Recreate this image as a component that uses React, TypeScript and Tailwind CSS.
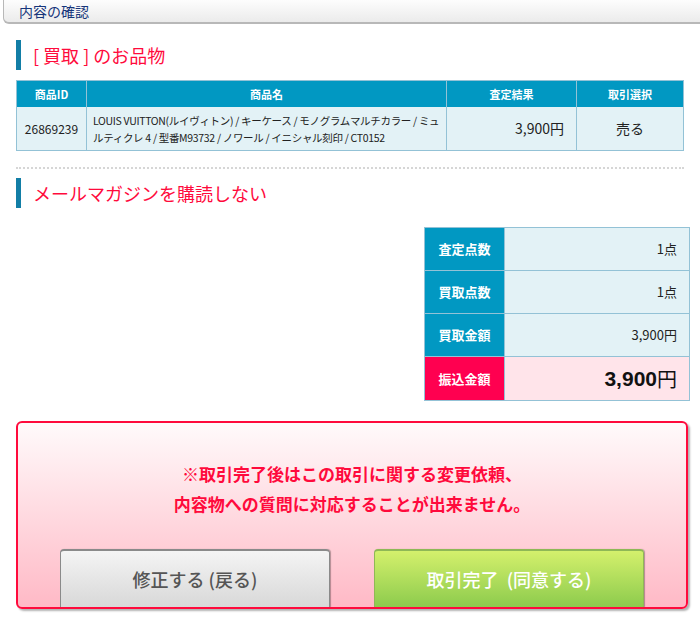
const font = "font-['Noto_Sans_CJK_JP','Noto_Sans',sans-serif]";

const SectionTitle = ({ children }: { children: React.ReactNode }) => (
  <div className="flex items-center h-[30px] border-l-[5px] border-[#127ea6] pl-[12px]">
    <h2 className="text-[18px] leading-none text-[#ff0a3c]">{children}</h2>
  </div>
);

const SummaryRow = ({ label, value }: { label: string; value: string }) => (
  <div className="flex h-[43px] border-b border-[#93c2d6]">
    <div className="w-[80px] bg-[#0198c2] flex items-center justify-center text-white font-bold text-[13px] border-r border-[#93c2d6]">
      {label}
    </div>
    <div className="flex-1 bg-[#e3f2f6] flex items-center justify-end pr-[12px] text-[13px] text-[#222]">
      {value}
    </div>
  </div>
);

export default function App() {
  return (
    <div className={`${font} w-[700px] h-[621px] bg-white overflow-hidden`}>
      {/* top bar */}
      <div className="ml-[3px] h-[24px] bg-gradient-to-b from-[#fdfdfd] to-[#ebebeb] border-l border-b-2 border-[#b8b8b8] rounded-bl-[6px] flex items-center pl-[15px]">
        <span className="text-[14px] text-[#16357a] leading-none">内容の確認</span>
      </div>

      <div className="px-[16px] pt-[16px]">
        <SectionTitle>[ 買取 ] のお品物</SectionTitle>

        {/* item table */}
        <div className="mt-[10px] border border-[#93c2d6] text-[#222]">
          <div className="flex h-[26px] bg-[#0198c2] text-white font-bold text-[11px]">
            <div className="w-[70px] flex items-center justify-center border-r border-[#93c2d6]">商品ID</div>
            <div className="w-[360px] flex items-center justify-center border-r border-[#93c2d6]">商品名</div>
            <div className="w-[130px] flex items-center justify-center border-r border-[#93c2d6]">査定結果</div>
            <div className="flex-1 flex items-center justify-center">取引選択</div>
          </div>
          <div className="flex h-[43px] bg-[#e3f2f6]">
            <div className="w-[70px] flex items-center justify-center border-r border-[#93c2d6] text-[12px]">26869239</div>
            <div className="w-[360px] flex items-center pl-[6px] pr-[2px] border-r border-[#93c2d6] text-[10.5px] tracking-[-0.03em] leading-[17px]">
              LOUIS VUITTON(ルイヴィトン) / キーケース / モノグラムマルチカラー / ミュルティクレ 4 / 型番M93732 / ノワール / イニシャル刻印 / CT0152
            </div>
            <div className="w-[130px] flex items-center justify-end pr-[12px] border-r border-[#93c2d6] text-[14px]">3,900円</div>
            <div className="flex-1 flex items-center justify-center text-[14px]">売る</div>
          </div>
        </div>

        <div className="mt-[16px] border-t-2 border-dotted border-[#d6d6d6]" />

        <div className="mt-[9px]">
          <SectionTitle>メールマガジンを購読しない</SectionTitle>
        </div>

        {/* summary */}
        <div className="flex justify-end mt-[19px] -mr-[6px]">
          <div className="w-[266px] border border-[#93c2d6] border-b-0">
            <SummaryRow label="査定点数" value="1点" />
            <SummaryRow label="買取点数" value="1点" />
            <SummaryRow label="買取金額" value="3,900円" />
            <div className="flex h-[44px] border-b border-[#93c2d6]">
              <div className="w-[80px] bg-[#ff0050] flex items-center justify-center text-white font-bold text-[13px] border-r border-[#93c2d6]">
                振込金額
              </div>
              <div className="flex-1 bg-[#ffe4ea] flex items-center justify-end pr-[12px] text-[#111]">
                <span className="text-[21px] font-bold font-['Liberation_Sans',sans-serif]">3,900</span>
                <span className="text-[20px]">円</span>
              </div>
            </div>
          </div>
        </div>

        {/* notice box */}
        <div className="mt-[20px] w-[672px] h-[188px] border-2 border-[#ff0a3c] rounded-[6px] bg-gradient-to-b from-[#fffafb] to-[#ffb9c6] shadow-[2px_2px_2px_rgba(0,0,0,0.3)] flex flex-col overflow-hidden">
          <div className="flex-1 flex flex-col items-center justify-center pt-[6px] text-[#ff0a3c] font-semibold text-[17px] leading-[30px]">
            <p>※取引完了後はこの取引に関する変更依頼、</p>
            <p>内容物への質問に対応することが出来ません。</p>
          </div>
          <div className="flex justify-center gap-[44px] h-[58px]">
            <button className="w-[270px] h-full rounded-t-[4px] border border-b-0 border-t-2 border-[#8a8a8a] bg-gradient-to-b from-[#f4f4f4] to-[#d8d8d8] text-[#555] text-[18px] font-medium shadow-[1px_0_1px_rgba(0,0,0,0.3)]">
              修正する (戻る)
            </button>
            <button className="w-[270px] h-full rounded-t-[4px] border border-b-0 border-t-2 border-[#8fb856] bg-gradient-to-b from-[#d4f06c] to-[#8ccb4d] text-white text-[18px] font-medium shadow-[1px_0_1px_rgba(0,0,0,0.3)] whitespace-pre">
              取引完了  (同意する)
            </button>
          </div>
        </div>
      </div>
    </div>
  );
}
